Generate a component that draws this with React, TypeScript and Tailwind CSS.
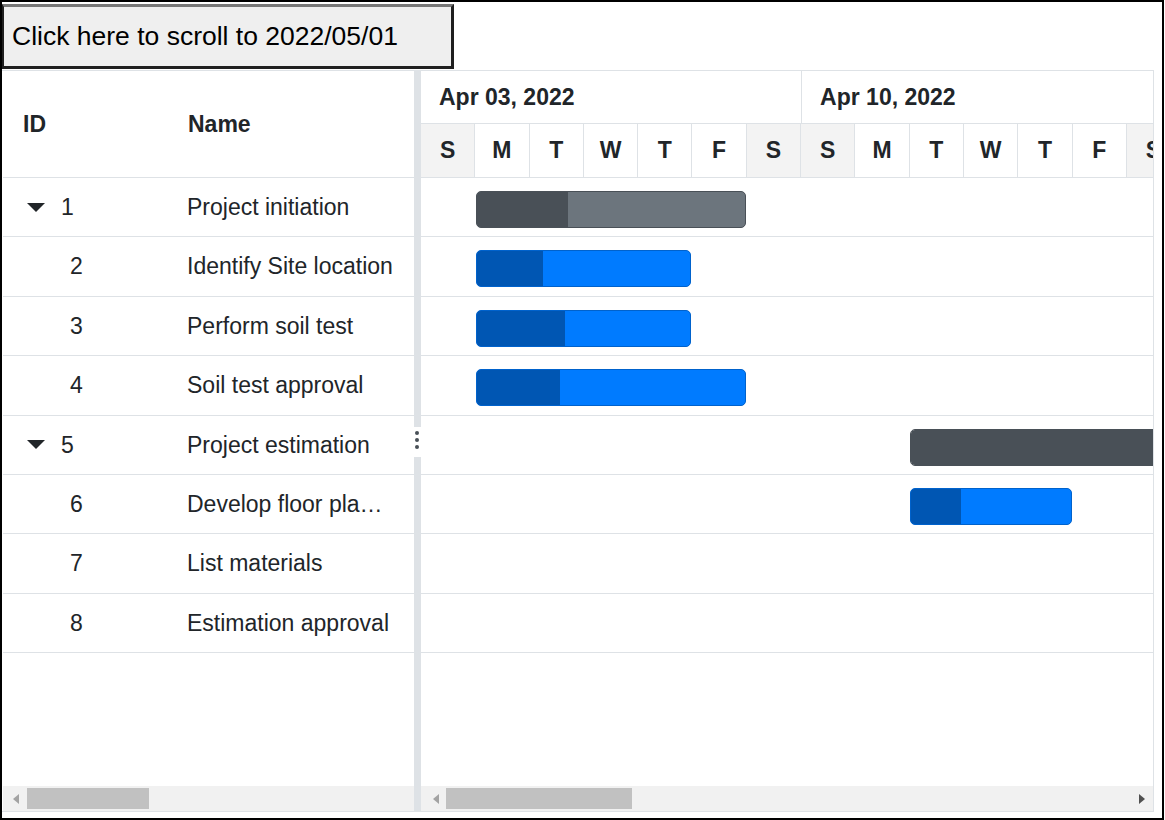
import React from 'react';

const DAY = 54.3;

type Task = {
  id: number;
  name: string;
  parent?: boolean;
  start?: number; // day offset from Apr 03
  days?: number;
  progress?: number; // px
};

const tasks: Task[] = [
  { id: 1, name: 'Project initiation', parent: true, start: 1, days: 5, progress: 91 },
  { id: 2, name: 'Identify Site location', start: 1, days: 4, progress: 66 },
  { id: 3, name: 'Perform soil test', start: 1, days: 4, progress: 88 },
  { id: 4, name: 'Soil test approval', start: 1, days: 5, progress: 83 },
  { id: 5, name: 'Project estimation', parent: true, start: 9, days: 6, progress: 400 },
  { id: 6, name: 'Develop floor plan for estimation', start: 9, days: 3, progress: 50 },
  { id: 7, name: 'List materials' },
  { id: 8, name: 'Estimation approval' },
];

const weeks = ['Apr 03, 2022', 'Apr 10, 2022', 'Apr 17, 2022'];
const dayLetters = ['S', 'M', 'T', 'W', 'T', 'F', 'S'];

function Caret() {
  return (
    <svg width="18" height="9" viewBox="0 0 18 9" className="shrink-0">
      <polygon points="0,0 18,0 9,9" fill="#212529" />
    </svg>
  );
}

function Arrow({ dir, color }: { dir: 'left' | 'right'; color: string }) {
  return (
    <svg width="6" height="10" viewBox="0 0 6 10">
      {dir === 'left' ? (
        <polygon points="6,0 6,10 0,5" fill={color} />
      ) : (
        <polygon points="0,0 0,10 6,5" fill={color} />
      )}
    </svg>
  );
}

function Bar({ task }: { task: Task }) {
  if (task.start === undefined || task.days === undefined) return null;
  const left = task.start * DAY + 0.5;
  const width = task.days * DAY - 1.5;
  const base = task.parent ? 'bg-[#6c757d] border-[#495057]' : 'bg-[#007bff] border-[#0062cc]';
  const prog = task.parent ? 'bg-[#495057]' : 'bg-[#0056b3]';
  return (
    <div
      className={`absolute top-[13px] h-[37px] rounded-[5px] border overflow-hidden ${base}`}
      style={{ left, width }}
    >
      <div className={`h-full ${prog}`} style={{ width: Math.min(task.progress ?? 0, width) }} />
    </div>
  );
}

export default function App() {
  return (
    <div className="w-[1165px] h-[820px] bg-white font-['Liberation_Sans',Arial,sans-serif] text-[#212529]">
      <div className="w-[1164px] h-[820px] border-2 border-black flex flex-col">
        {/* Scroll button */}
        <button className="mt-[2px] w-[452px] h-[65px] shrink-0 bg-[#efefef] border-[3px] border-[#1f1f1f] border-t-[#777777] border-l-[2px] text-left pl-[8px] text-[26.5px] leading-none text-black">
          Click here to scroll to 2022/05/01
        </button>

        {/* Gantt */}
        <div className="mt-[1px] w-[1152px] h-[742px] flex border-t border-r border-b border-[#dee2e6] pl-[1px]">
          {/* Grid */}
          <div className="w-[411px] flex flex-col shrink-0">
            <div className="h-[107px] flex items-center border-b border-[#dee2e6] font-bold text-[23px]">
              <div className="w-[165px] pl-[20px]">ID</div>
              <div className="w-[246px] pl-[20px]">Name</div>
            </div>
            {tasks.map((t) => (
              <div key={t.id} className="h-[59.4px] flex items-center border-b border-[#dee2e6] text-[23px]">
                <div className="w-[165px] flex items-center">
                  {t.parent ? (
                    <div className="flex items-center pl-[24px]">
                      <Caret />
                      <span className="ml-[16px]">{t.id}</span>
                    </div>
                  ) : (
                    <span className="pl-[67px]">{t.id}</span>
                  )}
                </div>
                <div className="w-[246px] pl-[19px] pr-[20px] truncate">{t.name}</div>
              </div>
            ))}
            <div className="flex-1" />
            <div className="h-[25px] bg-[#f1f1f1] flex items-center">
              <div className="w-[24px] flex justify-center pl-[2px]">
                <Arrow dir="left" color="#a3a3a3" />
              </div>
              <div className="w-[122px] h-[21px] bg-[#c1c1c1]" />
            </div>
          </div>

          {/* Splitter */}
          <div className="w-[7px] shrink-0 bg-[#dee2e6] relative">
            <div className="absolute left-[-2px] top-[356px] w-[10px] h-[30px] bg-white flex flex-col items-center pt-[4px] gap-[3px]">
              <div className="w-[4px] h-[4px] rounded-full bg-[#495057]" />
              <div className="w-[4px] h-[4px] rounded-full bg-[#495057]" />
              <div className="w-[4px] h-[4px] rounded-full bg-[#495057]" />
            </div>
          </div>

          {/* Chart */}
          <div className="w-[732px] flex flex-col overflow-hidden">
            <div className="h-[107px] border-b border-[#dee2e6] flex flex-col">
              <div className="h-[53px] flex border-b border-[#dee2e6]">
                {weeks.map((w, i) => (
                  <div
                    key={w}
                    className={`w-[380.1px] shrink-0 flex items-center pl-[18px] font-bold text-[23px] ${i > 0 ? 'border-l border-[#dee2e6]' : ''}`}
                  >
                    {w}
                  </div>
                ))}
              </div>
              <div className="h-[53px] flex">
                {weeks.map((w) =>
                  dayLetters.map((d, j) => (
                    <div
                      key={w + j}
                      className={`w-[54.3px] shrink-0 flex items-center justify-center font-bold text-[23px] border-r border-[#dee2e6] ${j === 0 || j === 6 ? 'bg-[#f3f3f3]' : ''}`}
                    >
                      {d}
                    </div>
                  ))
                )}
              </div>
            </div>
            {tasks.map((t) => (
              <div key={t.id} className="h-[59.4px] relative border-b border-[#dee2e6]">
                <Bar task={t} />
              </div>
            ))}
            <div className="flex-1" />
            <div className="h-[25px] bg-[#f1f1f1] flex items-center">
              <div className="w-[25px] flex justify-center pl-[4px]">
                <Arrow dir="left" color="#a3a3a3" />
              </div>
              <div className="w-[186px] h-[21px] bg-[#c1c1c1]" />
              <div className="flex-1" />
              <div className="w-[20px] flex justify-center pr-[2px]">
                <Arrow dir="right" color="#505050" />
              </div>
            </div>
          </div>
        </div>
      </div>
    </div>
  );
}
